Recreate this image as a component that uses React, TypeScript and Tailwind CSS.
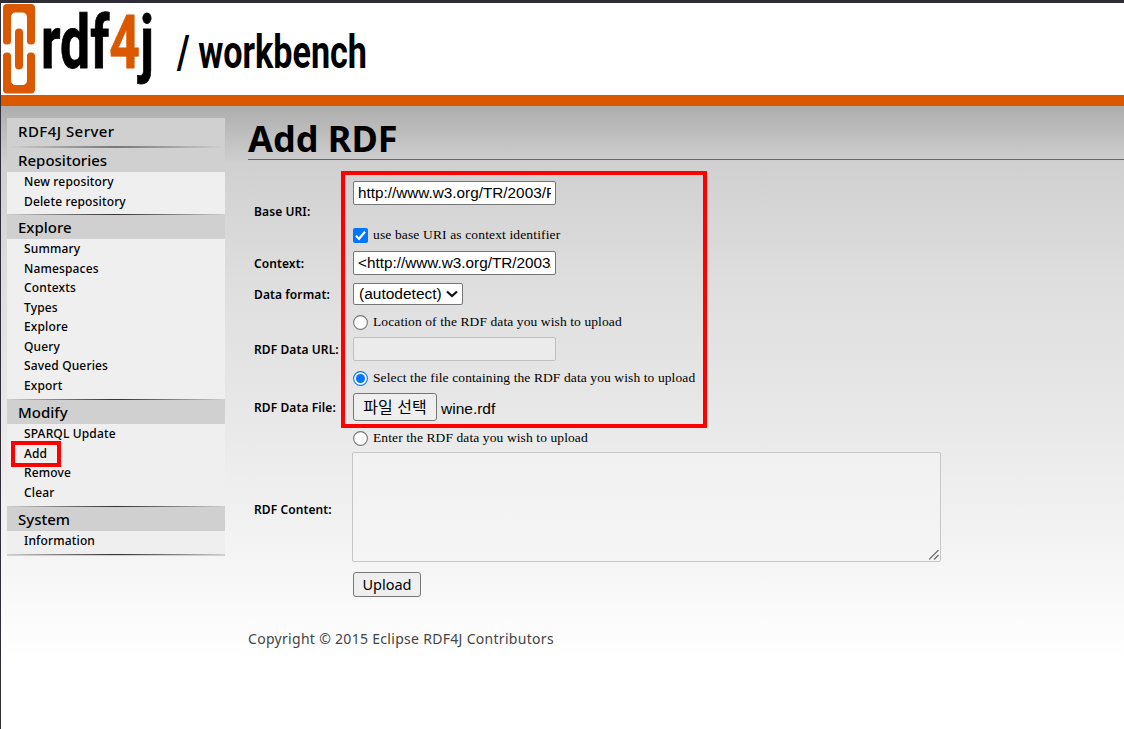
import React from "react";

const sections = [
  { title: "Repositories", items: ["New repository", "Delete repository"], body: "h-[42px]" },
  {
    title: "Explore",
    items: ["Summary", "Namespaces", "Contexts", "Types", "Explore", "Query", "Saved Queries", "Export"],
    body: "h-[160px]",
  },
  { title: "Modify", items: ["SPARQL Update", "Add", "Remove", "Clear"], body: "h-[82px]" },
  { title: "System", items: ["Information"], body: "h-[23px]" },
];

function Logo() {
  return (
    <svg width="380" height="92" viewBox="0 3 380 92" className="block">
      <g fill="#da5800">
        <path d="M7 4h24a4 4 0 0 1 4 4v33a3.500 3.500 0 0 1-3.500 3.500h-1A3.500 3.500 0 0 1 27 41V17a4.500 4.500 0 0 0-4.500-4.500h-7A4.500 4.500 0 0 0 11 17v24a3.500 3.500 0 0 1-3.500 3.500h-1A3.500 3.500 0 0 1 3 41V8a4 4 0 0 1 4-4z" />
        <path d="M7 93.500h24a4 4 0 0 0 4-4V56a3.500 3.500 0 0 0-3.500-3.500h-1A3.500 3.500 0 0 0 27 56v24.500a4.500 4.500 0 0 1-4.500 4.500h-7a4.500 4.500 0 0 1-4.500-4.500V56a3.500 3.500 0 0 0-3.500-3.500h-1A3.500 3.500 0 0 0 3 56v33.500a4 4 0 0 0 4 4z" />
        <rect x="15" y="28.500" width="8" height="41" rx="4" />
      </g>
      <g fontFamily="Roboto, sans-serif" fontWeight="700">
        <text x="41" y="68" fontSize="75" textLength="113" lengthAdjust="spacingAndGlyphs" stroke="#000" strokeWidth="0.800">
          rdf<tspan fill="#da5800" stroke="#da5800">4</tspan>j
        </text>
        <text x="177" y="68" fontSize="46" textLength="190" lengthAdjust="spacingAndGlyphs">/ workbench</text>
      </g>
    </svg>
  );
}

function Rule() {
  return <div className="h-px bg-linear-to-r from-[#d0d0d0] via-[#333] to-[#d0d0d0]" />;
}

function Sidebar() {
  return (
    <nav className="mt-3 ml-1.5 w-[218px] shrink-0 self-start text-black">
      <div className="flex h-7 items-center bg-[#d0d0d0] pb-0.5 pl-[11px] text-[15px] font-medium tracking-[0.450px]">RDF4J Server</div>
      <div className="h-0.5 bg-linear-to-r from-[#d0d0d0] via-[#777] to-[#d0d0d0]" />
      {sections.map((s) => (
        <div key={s.title}>
          <div className="flex h-6 items-center bg-[#d0d0d0] pt-px pl-[11px] text-[15px] font-medium">{s.title}</div>
          <ul className={"bg-[#efefef] pl-[17px] text-[12px] leading-[19.500px] font-medium tracking-[0.150px] " + s.body}>
            {s.items.map((i) => (
              <li key={i} className="relative">
                {i}
                {i === "Add" && <span className="absolute -top-[3px] -left-[13px] h-[26px] w-[50px] border-4 border-[#f00]" />}
              </li>
            ))}
          </ul>
          <Rule />
        </div>
      ))}
      <div className="h-px bg-[#d0d0d0]" />
    </nav>
  );
}

function Label({ children, pad = "" }: { children?: React.ReactNode; pad?: string }) {
  return <div className={"flex items-center text-[12px] font-semibold tracking-[0.100px] whitespace-nowrap " + pad}>{children}</div>;
}

function Choice({ text, checked = false, square = false }: { text: string; checked?: boolean; square?: boolean }) {
  return (
    <div className="flex h-[15px] items-center gap-[5px] pl-px">
      <svg width="15" height="15" viewBox="0 0 15 15" className="shrink-0">
        {square ? (
          <>
            <rect width="15" height="15" rx="2" fill="#0075ff" />
            <path d="M3 7.800l3 3 6-7" fill="none" stroke="#fff" strokeWidth="2.200" />
          </>
        ) : (
          <>
            <circle cx="7.500" cy="7.500" r="6.900" fill="#fff" stroke={checked ? "#0075ff" : "#767676"} strokeWidth="1.100" />
            {checked && <circle cx="7.500" cy="7.500" r="4.500" fill="#0075ff" />}
          </>
        )}
      </svg>
      <span
        className={
          "font-['Liberation_Serif',serif] text-[13.500px] leading-none whitespace-nowrap " +
          (square ? "-mt-px tracking-[0.140px]" : "-mt-[2px] tracking-[0.100px]")
        }
      >
        {text}
      </span>
    </div>
  );
}

const field = "ml-px h-6 w-[203px] rounded-[2px] border px-1 font-['Liberation_Sans',sans-serif] text-[15.300px] leading-[22px] whitespace-nowrap";

export default function App() {
  return (
    <div className="h-[729px] w-[1124px] overflow-hidden border-t-[3px] border-l border-[#2f2d35] bg-white font-['Noto_Sans',sans-serif] text-black">
      <header className="h-[92px]">
        <div className="-ml-px"><Logo /></div>
      </header>
      <div className="h-[11px] bg-[#da5800]" />
      <div className="flex h-[623px] bg-[linear-gradient(to_bottom,#adadad_0px,#d0d0d0_58px,#dedede_174px,#e9e9e9_324px,#f5f5f5_454px,#ffffff_555px)]">
        <Sidebar />
        <main className="ml-[23px] flex-1">
          <h1 className="mt-3 h-[42px] border-b border-[#666] text-[36px] leading-[42px] font-bold whitespace-nowrap">Add RDF</h1>
          <form className="relative mt-4 ml-1.5 grid grid-cols-[98px_1fr] grid-rows-[72px_31px_31px_56px_59px_141px_31px]">
            <div className="pointer-events-none absolute -top-[5px] left-[87px] h-[257px] w-[366px] border-4 border-[#f00]" />
            <Label>Base URI:</Label>
            <div className="pt-[5px]">
              <div className={field + " border-[#767676] bg-white"}>
                <div className="overflow-hidden">http://www.w3.org/TR/2003/PR</div>
              </div>
              <div className="mt-[23px]"><Choice square text="use base URI as context identifier" /></div>
            </div>
            <Label>Context:</Label>
            <div className="pt-[3px]">
              <div className={field + " border-[#767676] bg-white"}>
                <div className="overflow-hidden">&lt;http://www.w3.org/TR/2003/</div>
              </div>
            </div>
            <Label>Data format:</Label>
            <div className="pt-1">
              <div className="ml-px flex h-[22px] w-[110px] items-center justify-between rounded-[2px] border border-[#767676] bg-white pr-1 pl-[5px] font-['Liberation_Sans',sans-serif] text-[15.500px]">
                (autodetect)
                <svg width="12" height="8" viewBox="0 0 12 8"><path d="M1 1.500l5 4.500 5-4.500" fill="none" stroke="#111" strokeWidth="2.200" /></svg>
              </div>
            </div>
            <Label pad="pt-6">RDF Data URL:</Label>
            <div className="pt-[5px]">
              <Choice text="Location of the RDF data you wish to upload" />
              <div className={field + " mt-[7px] border-[#c0c0c0] bg-[#ebebeb]"} />
            </div>
            <Label pad="pt-[25px]">RDF Data File:</Label>
            <div className="pt-[5px]">
              <Choice checked text="Select the file containing the RDF data you wish to upload" />
              <div className="mt-[7px] ml-px flex h-7 items-center gap-1 font-['Liberation_Sans','Noto_Sans_CJK_KR',sans-serif] text-[15.500px]">
                <span className="flex h-7 w-[84px] items-center justify-center rounded-[3px] border border-[#767676] bg-[#efefef] pt-0.5 text-[16px] whitespace-nowrap">파일 선택</span>
                <span className="pt-1">wine.rdf</span>
              </div>
            </div>
            <Label pad="pt-[28px]">RDF Content:</Label>
            <div className="pt-[6px]">
              <Choice text="Enter the RDF data you wish to upload" />
              <div className="mt-[6px] flex h-[110px] w-[589px] items-end justify-end rounded-[2px] border border-[#c6c6c6] bg-linear-to-b from-[#f1f1f1] to-[#f5f5f5] p-px">
                <svg width="10" height="10" viewBox="0 0 10 10"><path d="M0 9.500L9.500 0M5 9.500L9.500 5" stroke="#666" strokeWidth="1.200" fill="none" /></svg>
              </div>
            </div>
            <div />
            <div className="pt-[6px] pl-px">
              <div className="flex h-[25px] w-[68px] items-center justify-center rounded-[3px] border border-[#767676] bg-[#efefef] text-[14.500px]">Upload</div>
            </div>
          </form>
          <footer className="mt-[32px] text-[14px] leading-5 tracking-[0.300px] text-[#444]">Copyright © 2015 Eclipse RDF4J Contributors</footer>
        </main>
      </div>
    </div>
  );
}
